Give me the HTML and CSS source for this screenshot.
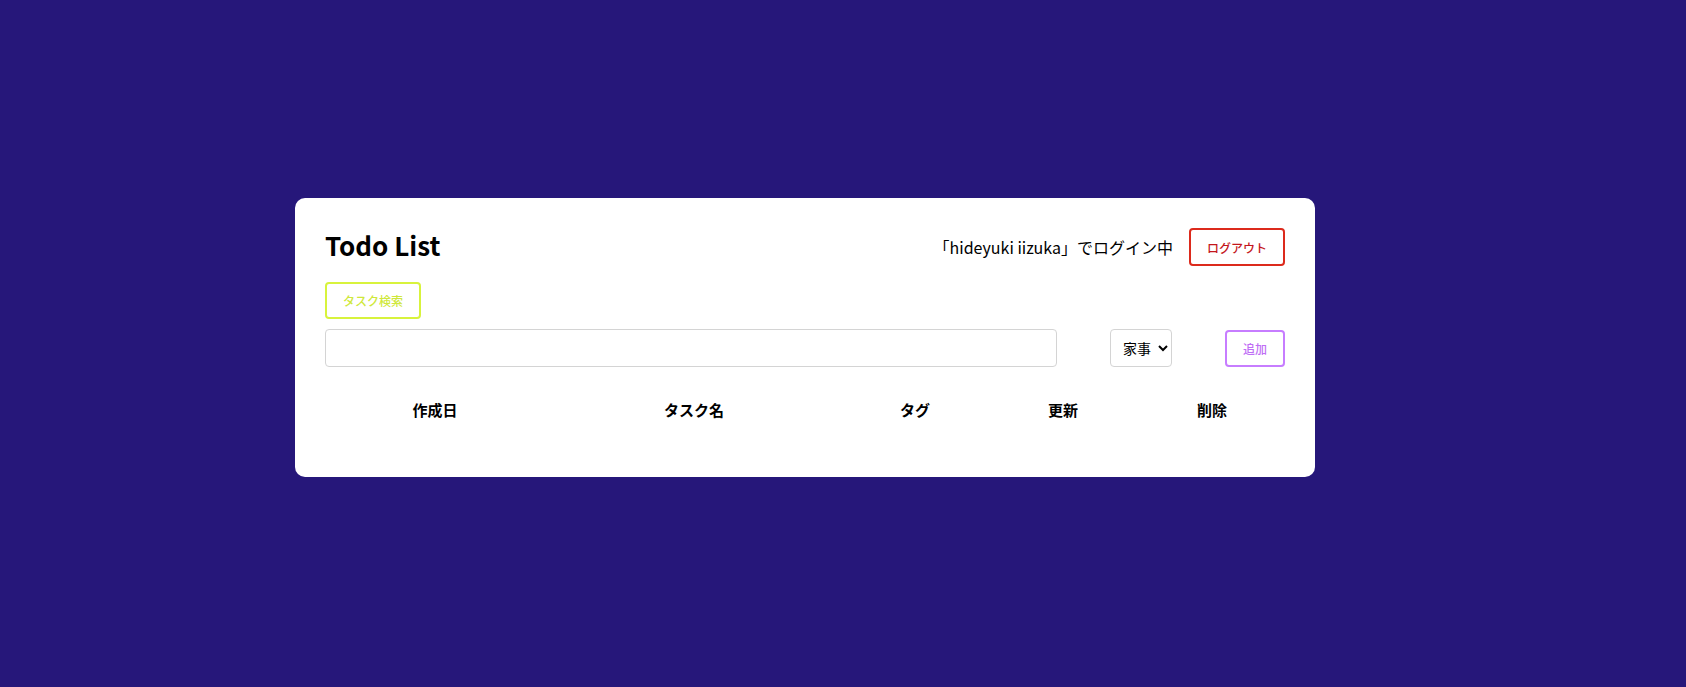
FILE: index.html
```html
<!DOCTYPE html>
<html lang="ja">
<head>
<meta charset="utf-8">
<title>Todo List</title>
<link rel="stylesheet" href="styles.css">
</head>
<body>
<div class="card">
  <div class="header">
    <h1 class="title">Todo List</h1>
    <div class="user">
      <span class="login-text">「hideyuki iizuka」でログイン中</span>
      <button class="btn btn-logout">ログアウト</button>
    </div>
  </div>
  <div class="search-row">
    <button class="btn btn-search">タスク検索</button>
  </div>
  <div class="add-row">
    <input class="task-input" type="text">
    <select class="tag-select"><option>家事</option></select>
    <button class="btn btn-add">追加</button>
  </div>
  <table class="todo-table">
    <thead>
      <tr>
        <th class="c1">作成日</th>
        <th class="c2">タスク名</th>
        <th class="c3">タグ</th>
        <th class="c4">更新</th>
        <th class="c5">削除</th>
      </tr>
    </thead>
    <tbody></tbody>
  </table>
</div>
</body>
</html>
```

FILE: styles.css
```css
* { box-sizing: border-box; }
html, body { margin: 0; height: 100%; }
body {
  background: #26177a;
  font-family: "Noto Sans CJK JP", "Open Sans", sans-serif;
  color: #000;
  padding: 198px 0 0 295px;
}
.card {
  width: 1020px;
  background: #fff;
  border-radius: 10px;
  padding: 30px 30px 44px;
}
.header {
  display: flex;
  justify-content: space-between;
  align-items: center;
  height: 38px;
}
.title {
  margin: -4px 0 0;
  font-size: 26px;
  font-weight: 700;
  line-height: 1;
}
.user {
  display: flex;
  align-items: center;
  gap: 16px;
}
.login-text { font-size: 16px; }
.btn {
  background: #fff;
  border: 2px solid;
  border-radius: 4px;
  font-family: inherit;
  font-size: 12px;
  font-weight: 500;
  padding: 0;
  cursor: pointer;
}
.btn-logout {
  width: 96px;
  height: 38px;
  border-color: #dc2a1c;
  color: #c4161c;
}
.search-row { margin-top: 16px; }
.btn-search {
  width: 96px;
  height: 37px;
  border-color: #d8f33c;
  color: #cfe83a;
}
.add-row {
  margin-top: 10px;
  display: flex;
  align-items: center;
  gap: 53px;
}
.task-input {
  flex: 1;
  height: 38px;
  border: 1px solid #d4d4d4;
  border-radius: 4px;
  font-family: inherit;
  font-size: 16px;
  padding: 0 10px;
}
.tag-select {
  width: 62px;
  height: 38px;
  border: 1px solid #d4d4d4;
  border-radius: 4px;
  background: #fff;
  font-family: inherit;
  font-size: 14px;
  padding: 0 4px 0 8px;
}
.btn-add {
  width: 60px;
  height: 37px;
  border-color: #c77dff;
  color: #c06ef5;
}
.todo-table {
  width: 100%;
  margin-top: 20px;
  border-collapse: collapse;
  table-layout: fixed;
}
.todo-table th {
  font-size: 15px;
  font-weight: 700;
  padding: 12px 0;
  line-height: 22px;
  text-align: center;
}
.c1 { width: 220px; }
.c2 { width: 298px; }
.c3 { width: 144px; }
.c4 { width: 152px; }
.c5 { width: 146px; }
```
